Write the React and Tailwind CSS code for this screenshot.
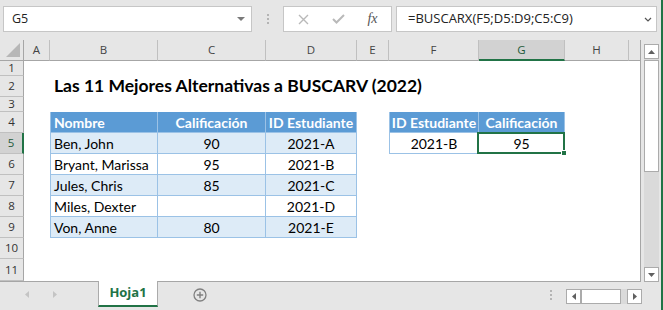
import React from "react";

const COLS = [
  { key: "A", w: "w-[26px]" },
  { key: "B", w: "w-[108px]" },
  { key: "C", w: "w-[108px]" },
  { key: "D", w: "w-[91px]" },
  { key: "E", w: "w-[32px]" },
  { key: "F", w: "w-[90px]" },
  { key: "G", w: "w-[86px]" },
  { key: "H", w: "w-[64px]" },
];

const ROWS = [
  { n: 1, h: "h-[15px]" },
  { n: 2, h: "h-[21px]" },
  { n: 3, h: "h-[15px]" },
  { n: 4, h: "h-[21px]" },
  { n: 5, h: "h-[21px]" },
  { n: 6, h: "h-[21px]" },
  { n: 7, h: "h-[21px]" },
  { n: 8, h: "h-[21px]" },
  { n: 9, h: "h-[21px]" },
  { n: 10, h: "h-[21px]" },
  { n: 11, h: "h-[22px]" },
];

const DATA = [
  ["Ben, John", "90", "2021-A"],
  ["Bryant, Marissa", "95", "2021-B"],
  ["Jules, Chris", "85", "2021-C"],
  ["Miles, Dexter", "", "2021-D"],
  ["Von, Anne", "80", "2021-E"],
];

const HEAD = "bg-[#5b9bd5] text-white font-bold border-r border-b border-[#9bc2e6]";
const BODY = "border-r border-b border-[#9bc2e6]";

function getCell(r, c) {
  if (r === 2 && c === "B") {
    return {
      cls: "pl-[4px] pb-[1px]",
      text: (
        <span className="whitespace-nowrap font-bold text-[17.5px] text-black">
          Las 11 Mejores Alternativas a BUSCARV (2022)
        </span>
      ),
    };
  }
  if (r === 4) {
    if (c === "B") return { cls: `${HEAD} border-l pl-[3px]`, text: "Nombre" };
    if (c === "C") return { cls: `${HEAD} justify-center`, text: "Calificación" };
    if (c === "D") return { cls: `${HEAD} justify-center`, text: "ID Estudiante" };
    if (c === "F") return { cls: `${HEAD} border-l justify-center`, text: "ID Estudiante" };
    if (c === "G") return { cls: `${HEAD} justify-center`, text: "Calificación" };
  }
  if (r >= 5 && r <= 9) {
    const row = DATA[r - 5];
    const band = r % 2 === 1 ? "bg-[#ddebf7]" : "bg-white";
    if (c === "B") return { cls: `${BODY} ${band} border-l pl-[3px]`, text: row[0] };
    if (c === "C") return { cls: `${BODY} ${band} justify-center`, text: row[1] };
    if (c === "D") return { cls: `${BODY} ${band} justify-center`, text: row[2] };
  }
  if (r === 5) {
    if (c === "F") return { cls: `${BODY} border-l justify-center`, text: "2021-B" };
    if (c === "G") return { cls: `${BODY} justify-center`, text: "95", selected: true };
  }
  return { cls: "", text: null };
}

function Tri({ dir, color = "#606060", w = 7, h = 4 }) {
  const d =
    dir === "up"
      ? `M0 ${h} L${w} ${h} L${w / 2} 0 Z`
      : dir === "down"
      ? `M0 0 L${w} 0 L${w / 2} ${h} Z`
      : dir === "left"
      ? `M${w} 0 L${w} ${h} L0 ${h / 2} Z`
      : `M0 0 L0 ${h} L${w} ${h / 2} Z`;
  return (
    <svg width={w} height={h} viewBox={`0 0 ${w} ${h}`}>
      <path d={d} fill={color} />
    </svg>
  );
}

function TopBar() {
  return (
    <div className="h-[40px] flex items-start pt-[6px] bg-[#e6e6e6] shrink-0">
      <div className="ml-[3px] w-[249px] h-[26px] bg-white border border-[#c6c6c6] flex items-center pl-[8px] pr-[6px] text-[12.5px] text-[#222]">
        <span className="flex-1">G5</span>
        <Tri dir="down" color="#7a7a7a" w={8} h={4} />
      </div>
      <div className="w-[31px] h-[26px] flex flex-col items-center justify-center gap-[2px]">
        <div className="w-[2px] h-[2px] bg-[#b4b4b4]" />
        <div className="w-[2px] h-[2px] bg-[#b4b4b4]" />
        <div className="w-[2px] h-[2px] bg-[#b4b4b4]" />
      </div>
      <div className="w-[109px] h-[26px] bg-white border border-[#c6c6c6] flex items-center">
        <div className="w-[38px] flex justify-center">
          <svg width="11" height="11" viewBox="0 0 11 11">
            <path d="M1 1 L10 10 M10 1 L1 10" stroke="#b9b9b9" strokeWidth="1.4" fill="none" />
          </svg>
        </div>
        <div className="w-[32px] flex justify-center">
          <svg width="13" height="10" viewBox="0 0 13 10">
            <path d="M1 5 L4.5 8.5 L12 1" stroke="#b9b9b9" strokeWidth="2" fill="none" />
          </svg>
        </div>
        <div className="w-[37px] flex justify-center">
          <span className="font-['Liberation_Serif',serif] italic text-[14px] text-[#555] leading-none">
            fx
          </span>
        </div>
      </div>
      <div className="ml-[4px] w-[261px] h-[26px] bg-white border border-[#c6c6c6] flex items-center pl-[11px] pr-[4px] text-[13px] text-[#222]">
        <span className="flex-1">=BUSCARX(F5;D5:D9;C5:C9)</span>
        <svg width="8" height="5" viewBox="0 0 8 5">
          <path d="M1 1 L4 4 L7 1" stroke="#555" strokeWidth="1.2" fill="none" />
        </svg>
      </div>
    </div>
  );
}

function Sheet() {
  return (
    <div className="w-[641px] flex flex-col bg-white border-r border-b border-[#a6a6a6]">
      <div className="h-[21px] flex bg-[#e6e6e6] shrink-0">
        <div className="w-[24px] h-full border-r border-b border-[#a6a6a6] flex items-end justify-end pr-[3px] pb-[3px]">
          <svg width="14" height="14" viewBox="0 0 14 14">
            <path d="M14 0 L14 14 L0 14 Z" fill="#b7b7b7" />
          </svg>
        </div>
        {COLS.map((c) => {
          const sel = c.key === "G";
          return (
            <div
              key={c.key}
              className={`${c.w} h-full shrink-0 flex items-center justify-center text-[11.5px] border-r ${
                sel
                  ? "bg-[#d2d2d2] border-b-2 border-b-[#217346] border-r-[#c0c0c0] text-[#1f5a3a]"
                  : "border-b border-r-[#c0c0c0] border-b-[#a6a6a6] text-[#444]"
              }`}
            >
              {c.key}
            </div>
          );
        })}
        <div className="flex-1 h-full border-b border-[#a6a6a6]" />
      </div>
      {ROWS.map((row) => (
        <div key={row.n} className={`${row.h} flex shrink-0`}>
          <div
            className={`w-[24px] h-full shrink-0 flex items-center justify-center text-[11.5px] border-b border-b-[#c0c0c0] ${
              row.n === 5
                ? "bg-[#d2d2d2] border-r-2 border-r-[#217346] text-[#1f5a3a]"
                : "bg-[#e6e6e6] border-r border-r-[#a6a6a6] text-[#333]"
            }`}
          >
            {row.n}
          </div>
          {COLS.map((c) => {
            const cell = getCell(row.n, c.key);
            return (
              <div
                key={c.key}
                className={`${c.w} h-full shrink-0 flex items-center relative font-['Lato',sans-serif] text-[14px] text-black whitespace-nowrap ${cell.cls}`}
              >
                {cell.text}
                {cell.selected && (
                  <div className="absolute -top-[1px] -left-[2px] -right-[1px] -bottom-[1px] border-2 border-[#217346] z-10">
                    <div className="absolute -right-[4px] -bottom-[4px] w-[6px] h-[6px] bg-[#217346] border border-white" />
                  </div>
                )}
              </div>
            );
          })}
          <div className="flex-1" />
        </div>
      ))}
    </div>
  );
}

function VScroll() {
  return (
    <div className="w-[20px] h-full bg-[#e6e6e6] pl-[3px] pt-[4px]">
      <div className="w-[15px] h-full bg-[#dadada] flex flex-col">
        <div className="h-[15px] bg-white border border-[#ababab] flex items-center justify-center">
          <Tri dir="up" />
        </div>
        <div className="h-[112px] mt-[1px] bg-white border border-[#ababab]" />
        <div className="flex-1" />
        <div className="h-[15px] bg-white border border-[#ababab] flex items-center justify-center">
          <Tri dir="down" />
        </div>
      </div>
    </div>
  );
}

function BottomBar() {
  return (
    <div className="h-[28px] flex items-start bg-[#e6e6e6] shrink-0">
      <div className="w-[98px] h-[25px] flex items-center">
        <div className="ml-[25px]">
          <Tri dir="left" color="#c4c4c4" w={4} h={7} />
        </div>
        <div className="ml-[24px]">
          <Tri dir="right" color="#c4c4c4" w={4} h={7} />
        </div>
      </div>
      <div className="w-[60px] h-[26px] -mt-[1px] bg-white border-x border-[#ababab] border-b-2 border-b-[#217346] flex items-center justify-center font-['Open_Sans',sans-serif] font-bold text-[13px] text-[#217346]">
        Hoja1
      </div>
      <div className="w-[84px] h-[26px] flex items-center justify-center">
        <svg width="14" height="14" viewBox="0 0 14 14">
          <circle cx="7" cy="7" r="6" stroke="#808080" strokeWidth="1.3" fill="none" />
          <path d="M7 3.8 V10.2 M3.8 7 H10.2" stroke="#808080" strokeWidth="1.4" />
        </svg>
      </div>
      <div className="w-[324px] h-[26px] flex items-center justify-end pr-[14px]">
        <div className="flex flex-col gap-[2px]">
          <div className="w-[2px] h-[2px] bg-[#b4b4b4]" />
          <div className="w-[2px] h-[2px] bg-[#b4b4b4]" />
          <div className="w-[2px] h-[2px] bg-[#b4b4b4]" />
        </div>
      </div>
      <div className="mt-[7px] w-[76px] h-[15px] flex bg-[#dadada]">
        <div className="w-[15px] h-full bg-white border border-[#ababab] flex items-center justify-center">
          <Tri dir="left" w={4} h={7} />
        </div>
        <div className="w-[40px] h-full bg-white border border-[#ababab]" />
        <div className="flex-1" />
        <div className="w-[15px] h-full bg-white border border-[#ababab] flex items-center justify-center">
          <Tri dir="right" w={4} h={7} />
        </div>
      </div>
    </div>
  );
}

export default function App() {
  return (
    <div className="w-[663px] h-[310px] overflow-hidden flex bg-[#e6e6e6] font-['Open_Sans',sans-serif]">
      <div className="w-[661px] h-full flex flex-col">
        <TopBar />
        <div className="h-[242px] flex shrink-0">
          <Sheet />
          <VScroll />
        </div>
        <BottomBar />
      </div>
      <div className="w-[2px] h-full bg-[#217346]" />
    </div>
  );
}
